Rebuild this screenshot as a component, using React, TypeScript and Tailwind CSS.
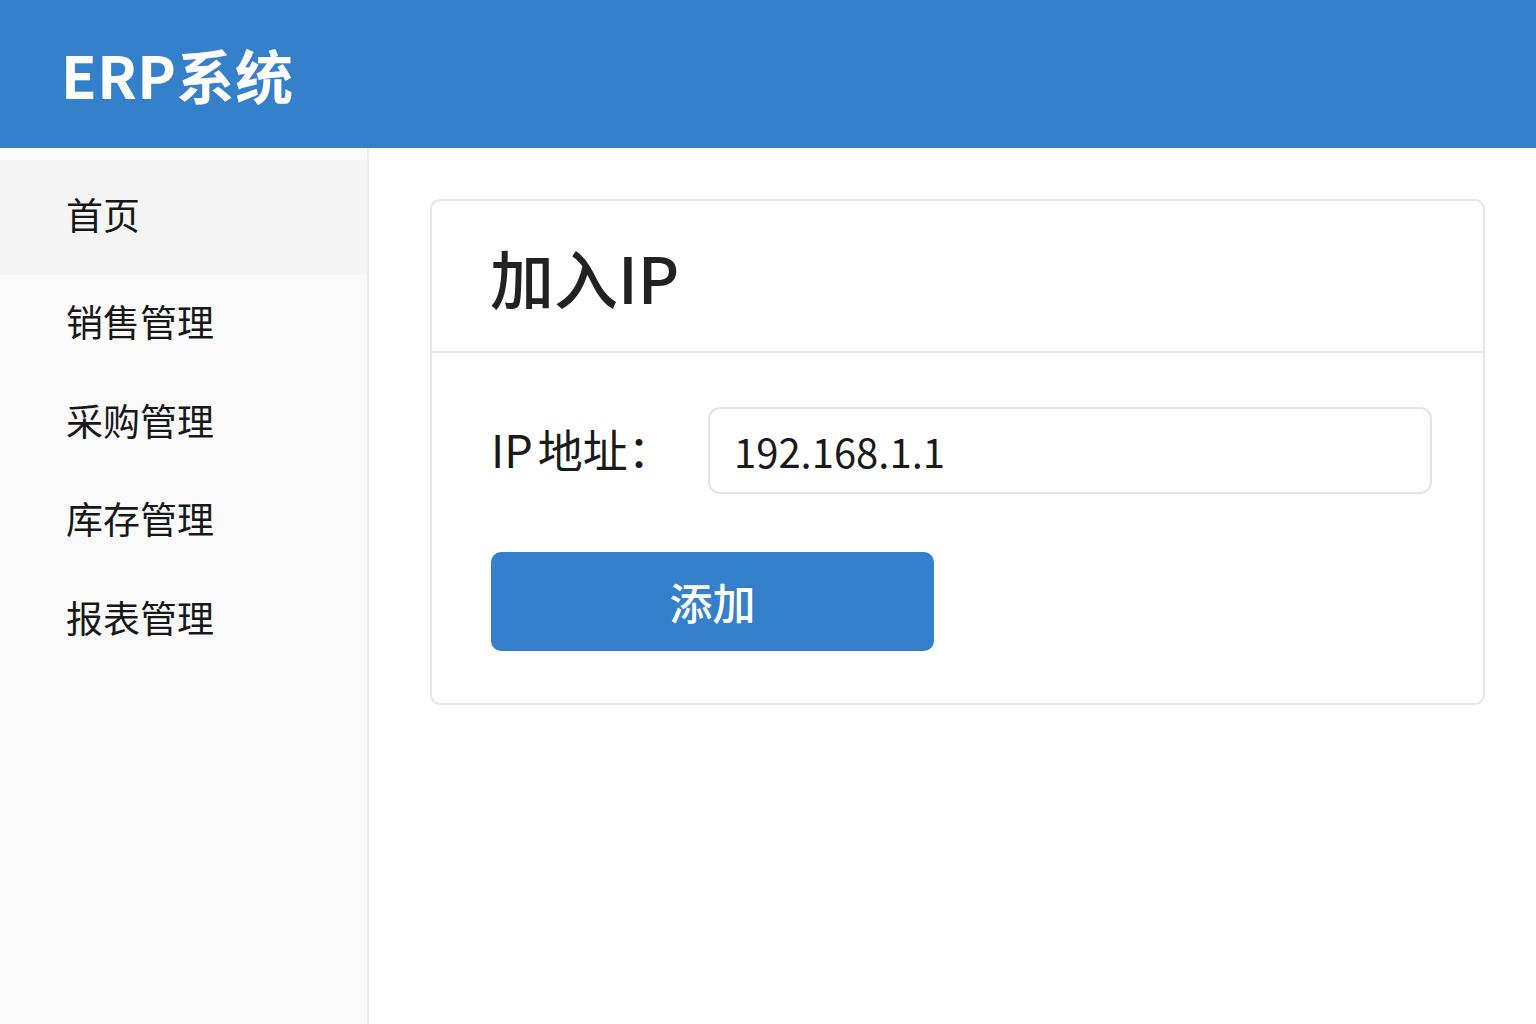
import React, { useState } from 'react'

const MENU = ['首页', '销售管理', '采购管理', '库存管理', '报表管理']

const FONT = { fontFamily: '"Noto Sans CJK SC", "Noto Sans", sans-serif' }

const Sidebar = ({ active }: { active: number }) => {
  return (
    <aside className="w-[369px] shrink-0 bg-[#fafafa] border-r-2 border-[#ececec] pt-3">
      {MENU.map((item, i) => (
        <div
          key={item}
          className={`flex items-center pl-[66px] pb-[5px] text-[37px] text-[#181818] ${
            i === 0 ? 'h-[115px]' : 'h-[98.5px]'
          } ${i === active ? 'bg-[#f5f5f5]' : ''}`}
        >
          {item}
        </div>
      ))}
    </aside>
  )
}

const AddIpCard = () => {
  const [ip, setIp] = useState('192.168.1.1')

  return (
    <div className="rounded-[10px] border-2 border-[#e6e6e6] bg-white">
      <div className="h-[152px] flex items-center pl-[58px] border-b-2 border-[#e6e6e6]">
        <h1 className="text-[64px] font-medium text-[#222] leading-none">加入IP</h1>
      </div>
      <div className="pl-[59px] pr-[51px] pt-[54px] pb-[52px]">
        <div className="flex items-center">
          <label className="w-[217px] shrink-0 text-[45px] text-[#1a1a1a] leading-none pb-1">
            <span className="mr-[5px]">IP</span>地址：
          </label>
          <input
            value={ip}
            onChange={(e) => setIp(e.target.value)}
            style={FONT}
            className="flex-1 h-[87px] rounded-[12px] border-2 border-[#e4e4e4] px-6 text-[40px] text-[#1a1a1a] outline-none"
          />
        </div>
        <button
          style={FONT}
          className="mt-[58px] w-[443px] h-[99px] rounded-[10px] bg-[#3580cb] text-white text-[43px] font-medium"
        >
          添加
        </button>
      </div>
    </div>
  )
}

export default function App() {
  return (
    <div style={FONT} className="w-[1536px] h-[1024px] flex flex-col bg-white overflow-hidden">
      <header className="h-[148px] shrink-0 bg-[#3580cb] flex items-center pl-[61px]">
        <span className="text-[58px] font-bold text-white leading-none tracking-[0.5px]">
          ERP系统
        </span>
      </header>
      <div className="flex flex-1">
        <Sidebar active={0} />
        <main className="flex-1 pl-[61px] pr-[51px] pt-[51px]">
          <AddIpCard />
        </main>
      </div>
    </div>
  )
}
